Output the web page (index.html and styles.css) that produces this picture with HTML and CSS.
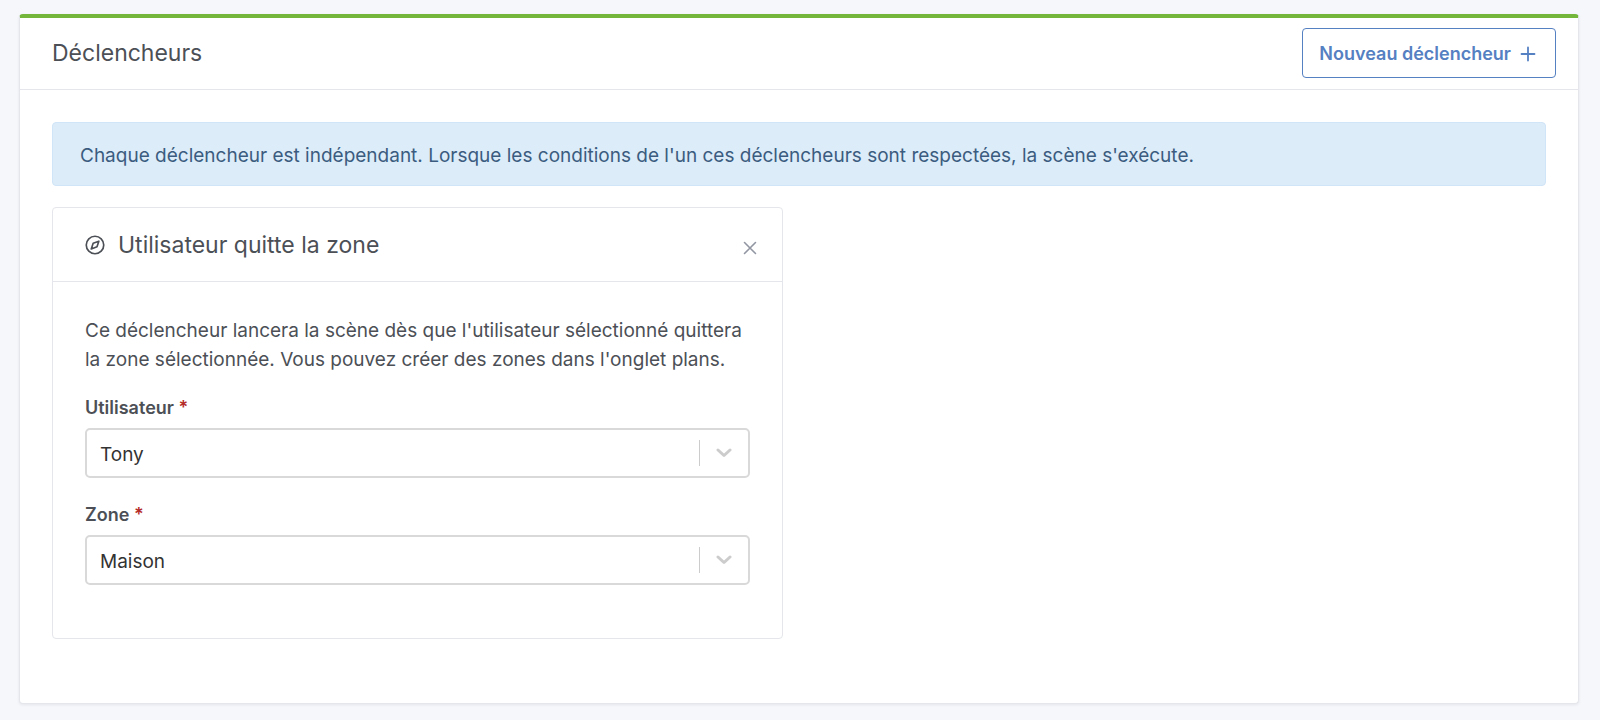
FILE: index.html
```html
<!DOCTYPE html>
<html lang="fr">
<head>
<meta charset="utf-8">
<meta name="viewport" content="width=device-width, initial-scale=1">
<title>Déclencheurs</title>
<link rel="stylesheet" href="styles.css">
</head>
<body>
<main class="page">
  <section class="card card-main">
    <header class="card-header">
      <h2 class="card-title">Déclencheurs</h2>
      <button type="button" class="btn-outline">
        <span>Nouveau déclencheur</span>
        <svg class="icon-plus" viewBox="0 0 16 16" aria-hidden="true"><path d="M8 1.5v13M1.5 8h13"/></svg>
      </button>
    </header>
    <div class="card-body">
      <div class="alert" role="status">Chaque déclencheur est indépendant. Lorsque les conditions de l'un ces déclencheurs sont respectées, la scène s'exécute.</div>
      <div class="trigger-grid">
        <article class="card trigger">
          <header class="trigger-header">
            <svg class="icon-compass" viewBox="0 0 24 24" aria-hidden="true"><circle cx="12" cy="12" r="10.5"/><path d="M16.6 7.4l-2.2 6.6-6.9 2.7 2.3-6.8z"/></svg>
            <h3 class="card-title">Utilisateur quitte la zone</h3>
            <button type="button" class="btn-close" aria-label="Supprimer">
              <svg viewBox="0 0 14 14" aria-hidden="true"><path d="M1.5 1.5l11 11M12.5 1.5l-11 11"/></svg>
            </button>
          </header>
          <form class="trigger-body">
            <p class="description">Ce déclencheur lancera la scène dès que l'utilisateur sélectionné quittera la zone sélectionnée. Vous pouvez créer des zones dans l'onglet plans.</p>
            <div class="field">
              <label for="user">Utilisateur <span class="required">*</span></label>
              <div class="select-box">
                <select id="user"><option>Tony</option></select>
                <span class="indicator"><svg viewBox="0 0 16 10" aria-hidden="true"><path d="M2 2l6 5.5 6-5.5"/></svg></span>
              </div>
            </div>
            <div class="field">
              <label for="zone">Zone <span class="required">*</span></label>
              <div class="select-box">
                <select id="zone"><option>Maison</option></select>
                <span class="indicator"><svg viewBox="0 0 16 10" aria-hidden="true"><path d="M2 2l6 5.5 6-5.5"/></svg></span>
              </div>
            </div>
          </form>
        </article>
      </div>
    </div>
  </section>
</main>
</body>
</html>
```
FILE: styles.css
```css
* {
  box-sizing: border-box;
}

body {
  margin: 0;
  background: #f5f7fb;
  color: #4c5056;
  font-family: Inter, "Liberation Sans", sans-serif;
  font-size: 19px;
  line-height: 29px;
}

.page {
  padding: 14px 21px 15px 19px;
}

.card {
  background: #fff;
  border: 1px solid #e4e6eb;
  border-radius: 4px;
}

.card-main {
  border-top: 4px solid #74b53c;
  box-shadow: 0 1px 3px rgba(30, 30, 60, 0.08);
}

.card-header {
  display: flex;
  align-items: center;
  justify-content: space-between;
  min-height: 72px;
  padding: 0 22px 1px 32px;
  border-bottom: 1px solid #e4e6eb;
}

.card-title {
  margin: 0;
  font-size: 23px;
  font-weight: 400;
  line-height: 28px;
}

.btn-outline {
  display: flex;
  align-items: center;
  gap: 9px;
  height: 50px;
  padding: 1px 19px 0 16px;
  background: #fff;
  border: 1px solid #5580c2;
  border-radius: 4px;
  color: #5580c2;
  font-family: inherit;
  font-size: 18px;
  font-weight: 600;
}

.icon-plus {
  width: 16px;
  height: 16px;
  fill: none;
  stroke: currentColor;
  stroke-width: 1.8;
  stroke-linecap: round;
}

.card-body {
  padding: 32px 32px 64px;
}

.alert {
  padding: 18px 27px 15px;
  background: #dcecf9;
  border: 1px solid #d0e5f7;
  border-radius: 4px;
  color: #3b5c7f;
}

.trigger-grid {
  display: grid;
  grid-template-columns: repeat(2, minmax(0, 1fr));
  gap: 32px;
  margin-top: 21px;
}

.trigger-header {
  display: flex;
  align-items: center;
  min-height: 74px;
  padding: 0 17px 0 32px;
  border-bottom: 1px solid #e4e6eb;
}

.icon-compass {
  width: 20px;
  height: 20px;
  margin-right: 13px;
  fill: none;
  stroke: currentColor;
  stroke-width: 2;
  stroke-linejoin: round;
}

.btn-close {
  display: flex;
  margin-left: auto;
  padding: 12px 8px 6px;
  background: none;
  border: 0;
  color: #9296a2;
}

.btn-close svg {
  width: 14px;
  height: 14px;
  fill: none;
  stroke: currentColor;
  stroke-width: 1.6;
  stroke-linecap: round;
}

.trigger-body {
  padding: 34px 32px 53px;
}

.description {
  margin: 0 0 20px;
}

.field + .field {
  margin-top: 23px;
}

.field label {
  display: block;
  margin-bottom: 6px;
  font-size: 18px;
  font-weight: 600;
  line-height: 28px;
}

.required {
  color: #b52b27;
}

.select-box {
  position: relative;
}

.select-box select {
  display: block;
  width: 100%;
  height: 50px;
  padding: 2px 64px 0 13px;
  appearance: none;
  background: #fff;
  border: 2px solid #d9d9d9;
  border-radius: 5px;
  color: #333;
  font-family: inherit;
  font-size: 19px;
}

.indicator {
  position: absolute;
  top: 12px;
  right: 2px;
  bottom: 12px;
  display: flex;
  align-items: center;
  justify-content: center;
  width: 49px;
  border-left: 1px solid #ccc;
  pointer-events: none;
}

.indicator svg {
  width: 16px;
  height: 10px;
  fill: none;
  stroke: #ccc;
  stroke-width: 3;
  stroke-linecap: round;
  stroke-linejoin: round;
}
```
